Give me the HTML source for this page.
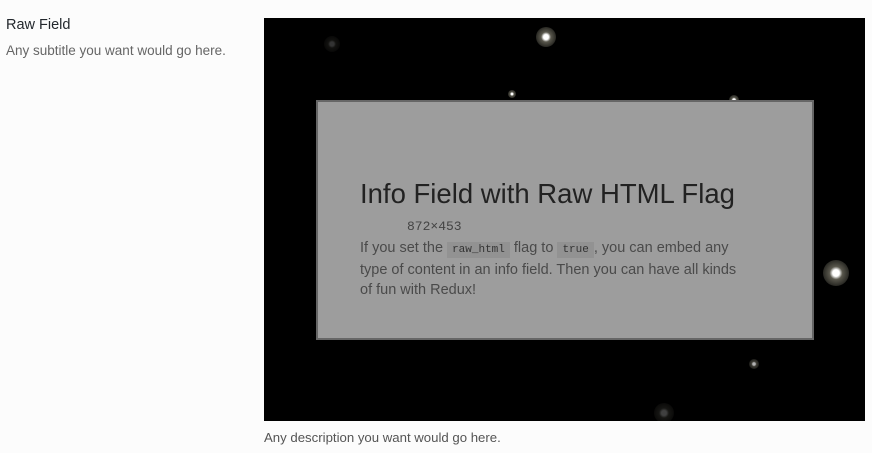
<!DOCTYPE html>
<html><head><style>
body{margin:0;width:872px;height:453px;background:#fcfcfc;font-family:"Liberation Sans",sans-serif;position:relative;overflow:hidden}
.t{position:absolute;left:6px;top:17px;font-size:14.5px;color:#23282d}
.s{position:absolute;left:6px;top:43px;font-size:13.5px;color:#666}
.bk{position:absolute;left:264px;top:18px;width:601px;height:403px;background:#000;overflow:hidden}
.st{position:absolute;border-radius:50%;background:radial-gradient(circle,#fff 0,#fff 18%,rgba(255,250,220,.35) 35%,rgba(255,250,220,0) 100%)}
.gb{position:absolute;left:316px;top:100px;width:494px;height:236px;background:#9d9d9d;border:2px solid #666}
h1{position:absolute;left:42px;top:76px;margin:0;font-weight:normal;font-size:27.5px;color:#222;white-space:nowrap}
.dim{position:absolute;left:89px;top:117px;font-family:"Liberation Mono",monospace;font-size:13px;color:#444}
.p{position:absolute;left:42px;top:136px;width:392px;font-size:14.5px;line-height:20px;color:#4a4a4a}
code{font-family:"Liberation Mono",monospace;font-size:11px;background:#929292;padding:2px 5px;color:#333}
.d{position:absolute;left:264px;top:430px;font-size:13.2px;color:#555}
</style></head><body>
<div class="t">Raw Field</div>
<div class="s">Any subtitle you want would go here.</div>
<div class="bk">
<div class="st" style="left:272px;top:9px;width:20px;height:20px"></div>
<div class="st" style="left:244px;top:72px;width:8px;height:8px"></div>
<div class="st" style="left:465px;top:77px;width:10px;height:10px"></div>
<div class="st" style="left:559px;top:242px;width:26px;height:26px"></div>
<div class="st" style="left:485px;top:341px;width:10px;height:10px;opacity:.7"></div>
<div class="st" style="left:60px;top:18px;width:16px;height:16px;opacity:.2"></div>
<div class="st" style="left:390px;top:385px;width:20px;height:20px;opacity:.25"></div>
</div>
<div class="gb">
<h1>Info Field with Raw HTML Flag</h1>
<div class="dim">872×453</div>
<div class="p">If you set the <code>raw_html</code> flag to <code>true</code>, you can embed any type of content in an info field. Then you can have all kinds of fun with Redux!</div>
</div>
<div class="d">Any description you want would go here.</div>
</body></html>
